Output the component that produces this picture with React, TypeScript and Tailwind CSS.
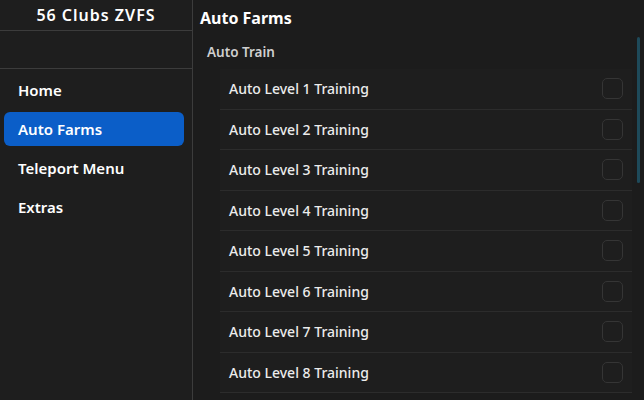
import React, { useState } from 'react';

const navItems = ['Home', 'Auto Farms', 'Teleport Menu', 'Extras'];
const levels = [1, 2, 3, 4, 5, 6, 7, 8];

export default function App() {
    const [active, setActive] = useState('Auto Farms');
    const [checked, setChecked] = useState<Record<number, boolean>>({});

    return (
        <div className="flex h-[400px] w-[644px] overflow-hidden bg-[#1c1c1c] text-white" style={{ fontFamily: '"Noto Sans", "Open Sans", sans-serif' }}>
            <aside className="flex w-[193px] shrink-0 flex-col border-r border-[#3c3c3c] bg-[#1e1e1e]">
                <div className="flex h-[31px] items-center justify-center border-b border-[#3c3c3c] text-[16px] font-semibold tracking-[1px]">
                    56 Clubs ZVFS
                </div>
                <div className="h-[38px] border-b border-[#3c3c3c]" />
                <nav className="flex flex-col gap-[5px] px-[4px] pt-[4px] pr-[8px]">
                    {navItems.map((item) => (
                        <button
                            key={item}
                            onClick={() => setActive(item)}
                            className={`flex h-[34px] items-center rounded-[6px] pl-[14px] text-left text-[15px] font-semibold ${active === item ? 'bg-[#0b5ec8]' : ''}`}
                        >
                            {item}
                        </button>
                    ))}
                </nav>
            </aside>

            <main className="relative flex flex-1 flex-col">
                <h1 className="flex h-[36px] items-center pl-[7px] text-[16px] font-bold">Auto Farms</h1>
                <h2 className="flex h-[33px] items-center pl-[14px] pb-[1px] text-[13.5px] font-semibold text-[#cfcfcf]">Auto Train</h2>
                <div className="ml-[27px] mr-[12px] flex flex-col bg-[#1e1e1e]">
                    {levels.map((n) => (
                        <div key={n} className="flex h-[40.5px] shrink-0 items-center justify-between border-b border-[#2c2c2c] pl-[9px] pr-[9px]">
                            <span className="text-[14px] font-medium text-[#ececec]">Auto Level {n} Training</span>
                            <button
                                onClick={() => setChecked({ ...checked, [n]: !checked[n] })}
                                className={`h-[21px] w-[21px] rounded-[5px] border border-[#353535] ${checked[n] ? 'bg-[#0b5ec8]' : 'bg-[#1e1e1e]'}`}
                            />
                        </div>
                    ))}
                </div>
                <div className="absolute right-[4px] top-[37px] h-[146px] w-[3px] rounded-full bg-[#1e4a5a]" />
            </main>
        </div>
    );
}
